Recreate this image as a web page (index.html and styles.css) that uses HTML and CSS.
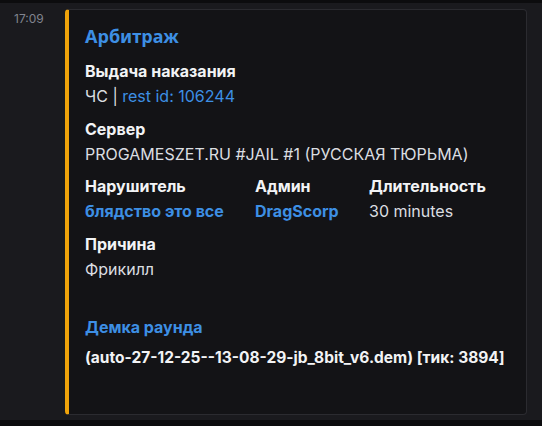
FILE: index.html
```html
<!DOCTYPE html>
<html lang="ru">
<head>
  <meta charset="UTF-8">
  <title>Арбитраж</title>
  <link rel="stylesheet" href="styles.css">
</head>
<body>

<div class="top-bar"></div>

<div class="message">
  <div class="time">17:09</div>

  <!-- Embed -->
  <div class="embed">
    <div class="embed-title">Арбитраж</div>

    <div class="field">
      <div class="field-name">Выдача наказания</div>
      <div class="field-value">ЧС | <span class="link">rest id: 106244</span></div>
    </div>

    <div class="field">
      <div class="field-name">Сервер</div>
      <div class="field-value">PROGAMESZET.RU #JAIL #1 (РУССКАЯ ТЮРЬМА)</div>
    </div>

    <div class="field-row">
      <div class="field">
        <div class="field-name">Нарушитель</div>
        <div class="field-value link bold">блядство это все</div>
      </div>
      <div class="field">
        <div class="field-name">Админ</div>
        <div class="field-value link bold">DragScorp</div>
      </div>
      <div class="field">
        <div class="field-name">Длительность</div>
        <div class="field-value">30 minutes</div>
      </div>
    </div>

    <div class="field">
      <div class="field-name">Причина</div>
      <div class="field-value">Фрикилл</div>
    </div>

    <div class="demo">
      <div class="demo-name">Демка раунда</div>
      <div class="demo-value">(auto-27-12-25--13-08-29-jb_8bit_v6.dem) [тик: 3894]</div>
    </div>
  </div>
</div>

<div class="bottom-bar"></div>

</body>
</html>
```

FILE: styles.css
```css
body {
  margin: 0;
  background: #1a1a1e;
  font-family: Inter, "Noto Sans", sans-serif;
  color: #dbdee1;
  width: 542px;
  height: 426px;
  overflow: hidden;
}
.top-bar {
  height: 3px;
  background: #0c0c0e;
}
.message {
  display: flex;
  padding-top: 6px;
}
.time {
  width: 65px;
  padding-left: 14px;
  box-sizing: border-box;
  font-size: 12px;
  line-height: 16px;
  padding-top: 2px;
  color: #80848e;
}
/* Embed */
.embed {
  width: 462px;
  height: 406px;
  box-sizing: border-box;
  background: #131316;
  border: 1px solid #2b2b30;
  border-left: 4px solid #f0a30a;
  border-radius: 4px;
  padding: 14px 16px 0 16px;
}
.embed-title {
  font-family: "Noto Sans", sans-serif;
  font-weight: 700;
  font-size: 18px;
  line-height: 24px;
  color: #3d8fe4;
  margin-bottom: 12px;
}
.field {
  margin-bottom: 10.7px;
}
.field-name {
  font-weight: 700;
  font-size: 16px;
  line-height: 22px;
  color: #f2f3f5;
}
.field-value {
  font-size: 16px;
  line-height: 22px;
  margin-top: 3px;
  color: #dbdee1;
}
.link {
  color: #3d8fe4;
}
.bold {
  font-weight: 700;
}
.field-row {
  display: grid;
  grid-template-columns: 170px 114px auto;
}
.demo {
  margin-top: 36px;
}
.demo-name {
  font-weight: 700;
  font-size: 16px;
  line-height: 22px;
  color: #3d8fe4;
}
.demo-value {
  font-weight: 700;
  font-size: 15.5px;
  line-height: 22px;
  margin-top: 9px;
  color: #f2f3f5;
}
.bottom-bar {
  margin-top: 5px;
  height: 10px;
  background: #0c0c0e;
}
```
